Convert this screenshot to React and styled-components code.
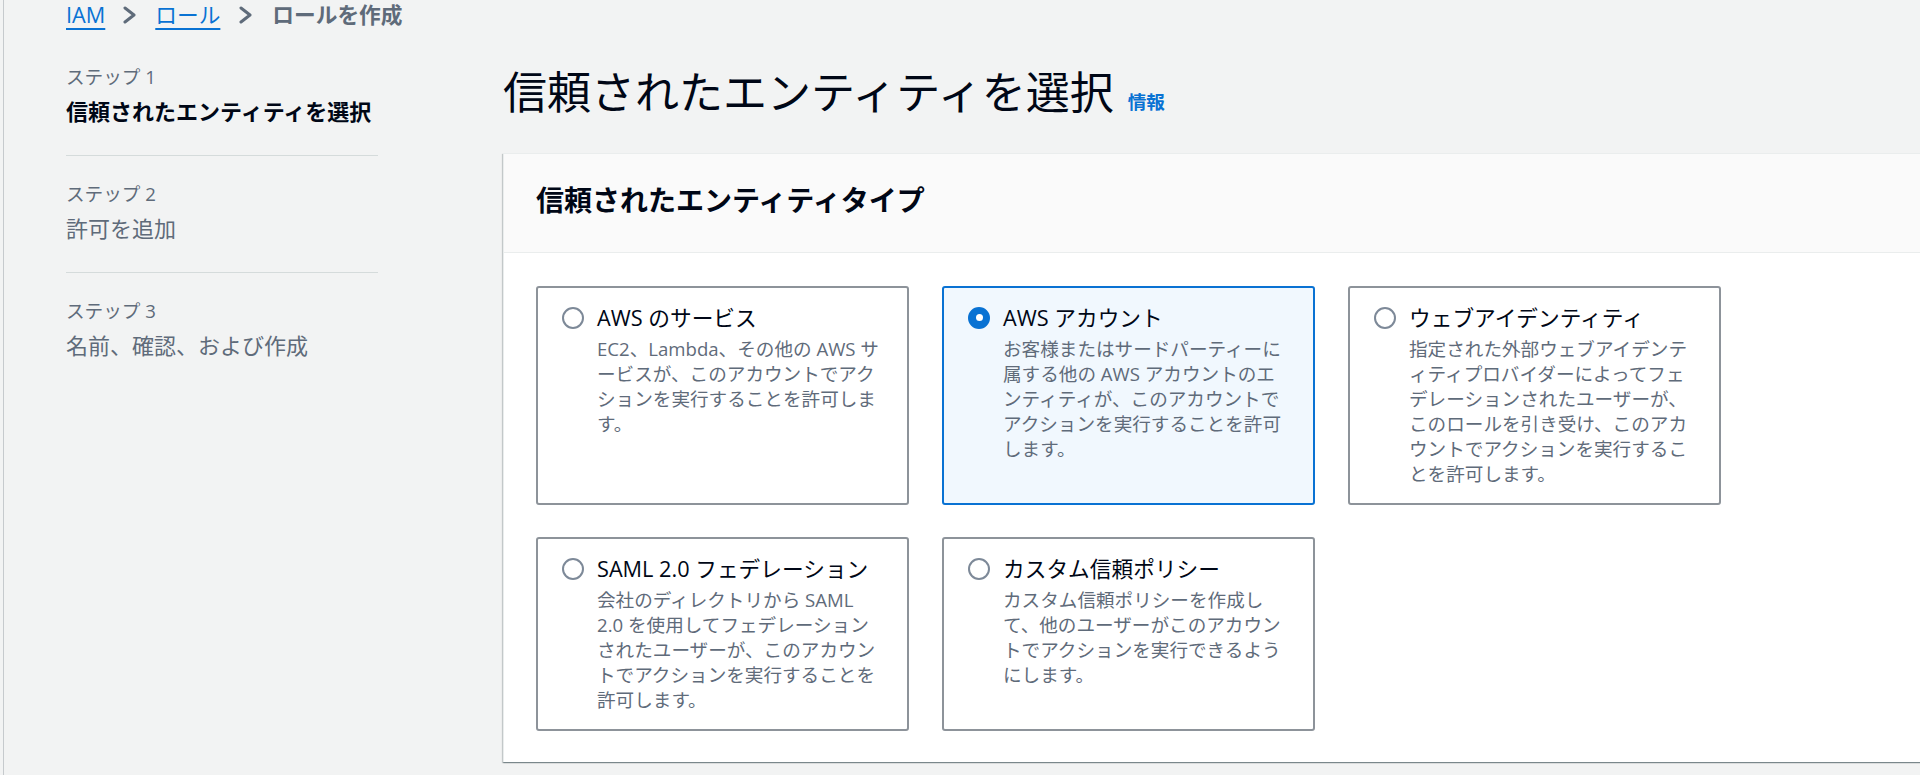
import React from "react";
import styled, { createGlobalStyle, css } from "styled-components";

const GlobalStyle = createGlobalStyle`
  html, body {
    margin: 0;
    padding: 0;
    background: #f2f3f3;
    overflow: hidden;
  }
  body {
    font-family: "Open Sans", "Noto Sans CJK JP", sans-serif;
    color: #000716;
    -webkit-font-smoothing: antialiased;
  }
  * { box-sizing: border-box; }
`;

const Page = styled.div`
  margin-left: 3px;
  border-left: 1px solid #c6cacd;
  padding-left: 62px;
  min-height: 775px;
  line-break: normal;
`;

const Breadcrumbs = styled.nav`
  display: flex;
  align-items: center;
  height: 29px;
  font-size: 21.7px;
  line-height: 29px;
  margin-bottom: 35px;
`;

const CrumbLink = styled.a`
  color: #0972d3;
  text-decoration: underline;
  text-decoration-thickness: 1.5px;
  text-underline-offset: 5px;
  cursor: pointer;
`;

const CrumbCurrent = styled.span`
  color: #5f6b7a;
  font-weight: 700;
`;

const Chevron = styled.svg`
  width: 16px;
  height: 18px;
  margin: 0 ${(p) => p.$gap || 17}px;
  flex: none;
`;

const Layout = styled.div`
  display: grid;
  grid-template-columns: 312px minmax(1460px, 1fr);
  column-gap: 125px;
  align-items: start;
`;

const StepNav = styled.ol`
  list-style: none;
  margin: 0;
  padding: 0;
`;

const Step = styled.li`
  padding: 25px 0 28px;
  border-bottom: 1px solid #d5dbdb;
  &:first-child { padding-top: 0; }
  &:last-child { border-bottom: none; }
`;

const StepLabel = styled.div`
  font-size: 18.6px;
  line-height: 25px;
  color: #5f6b7a;
  margin-bottom: 7px;
`;

const StepTitle = styled.div`
  font-size: 22px;
  line-height: 31px;
  color: ${(p) => (p.$active ? "#000716" : "#5f6b7a")};
  font-weight: ${(p) => (p.$active ? 700 : 400)};
`;

const Main = styled.main`
  min-width: 0;
`;

const HeaderRow = styled.div`
  display: flex;
  align-items: baseline;
  margin-bottom: 33px;
`;

const H1 = styled.h1`
  margin: 0;
  font-size: 44px;
  line-height: 56px;
  font-weight: 400;
  color: #000716;
`;

const InfoLink = styled.a`
  margin-left: 14px;
  font-size: 18.6px;
  font-weight: 700;
  color: #0972d3;
  cursor: pointer;
`;

const Card = styled.section`
  background: #ffffff;
  border-top: 1px solid #eaeded;
  border-left: 1px solid #eaeded;
  box-shadow: 0 1px 1px 0 rgba(0, 28, 36, 0.3), 1px 1px 1px 0 rgba(0, 28, 36, 0.15),
    -1px 1px 1px 0 rgba(0, 28, 36, 0.15);
`;

const CardHeader = styled.header`
  background: #fafafa;
  border-bottom: 1px solid #eaeded;
  padding: 29px 32px 35px;
`;

const H2 = styled.h2`
  margin: 0;
  font-size: 28px;
  line-height: 34px;
  font-weight: 700;
  color: #000716;
`;

const CardBody = styled.div`
  padding: 33px 32px 31px;
`;

const TileGrid = styled.div`
  display: grid;
  grid-template-columns: repeat(3, 373px);
  column-gap: 33px;
  row-gap: 32px;
`;

const Tile = styled.label`
  display: flex;
  align-items: flex-start;
  gap: 13px;
  padding: 14px 26px 17px 24px;
  border: 2px solid #8d939a;
  border-radius: 3px;
  background: #ffffff;
  cursor: pointer;
  ${(p) =>
    p.$selected &&
    css`
      border-color: #0972d3;
      background: #f1f8fe;
    `}
`;

const RadioWrap = styled.span`
  flex: none;
  height: 31px;
  display: flex;
  align-items: center;
`;

const Radio = styled.span`
  position: relative;
  width: 22px;
  height: 22px;
  border-radius: 50%;
  border: 2px solid #7d8998;
  background: #ffffff;
  ${(p) =>
    p.$checked &&
    css`
      border-color: #0972d3;
      background: #0972d3;
      &::after {
        content: "";
        position: absolute;
        left: 50%;
        top: 50%;
        width: 7px;
        height: 7px;
        margin: -3.5px 0 0 -3.5px;
        border-radius: 50%;
        background: #ffffff;
      }
    `}
`;

const TileText = styled.span`
  display: flex;
  flex-direction: column;
  min-width: 0;
`;

const TileTitle = styled.span`
  font-size: 21.7px;
  line-height: 31px;
  color: #000716;
`;

const TileDesc = styled.span`
  margin-top: 3px;
  font-size: 18.6px;
  line-height: 25px;
  color: #5f6b7a;
`;

const ChevronIcon = ({ gap }) => (
  <Chevron $gap={gap} viewBox="0 0 16 18" aria-hidden="true">
    <polyline
      points="3,2 12,9 3,16"
      fill="none"
      stroke="#5f6b7a"
      strokeWidth="3"
      strokeLinecap="round"
      strokeLinejoin="round"
    />
  </Chevron>
);

const steps = [
  { label: "ステップ 1", title: "信頼されたエンティティを選択", active: true },
  { label: "ステップ 2", title: "許可を追加" },
  { label: "ステップ 3", title: "名前、確認、および作成" },
];

const options = [
  {
    title: "AWS のサービス",
    desc: "EC2、Lambda、その他の AWS サービスが、このアカウントでアクションを実行することを許可します。",
  },
  {
    title: "AWS アカウント",
    desc: "お客様またはサードパーティーに属する他の AWS アカウントのエンティティが、このアカウントでアクションを実行することを許可します。",
    selected: true,
  },
  {
    title: "ウェブアイデンティティ",
    desc: "指定された外部ウェブアイデンティティプロバイダーによってフェデレーションされたユーザーが、このロールを引き受け、このアカウントでアクションを実行することを許可します。",
  },
  {
    title: "SAML 2.0 フェデレーション",
    desc: "会社のディレクトリから SAML 2.0 を使用してフェデレーションされたユーザーが、このアカウントでアクションを実行することを許可します。",
  },
  {
    title: "カスタム信頼ポリシー",
    desc: "カスタム信頼ポリシーを作成して、他のユーザーがこのアカウントでアクションを実行できるようにします。",
  },
];

export default function App() {
  return (
    <>
      <GlobalStyle />
      <Page lang="ja">
        <Breadcrumbs>
          <CrumbLink>IAM</CrumbLink>
          <ChevronIcon />
          <CrumbLink>ロール</CrumbLink>
          <ChevronIcon gap={18} />
          <CrumbCurrent>ロールを作成</CrumbCurrent>
        </Breadcrumbs>
        <Layout>
          <StepNav>
            {steps.map((s) => (
              <Step key={s.label}>
                <StepLabel>{s.label}</StepLabel>
                <StepTitle $active={s.active}>{s.title}</StepTitle>
              </Step>
            ))}
          </StepNav>
          <Main>
            <HeaderRow>
              <H1>信頼されたエンティティを選択</H1>
              <InfoLink>情報</InfoLink>
            </HeaderRow>
            <Card>
              <CardHeader>
                <H2>信頼されたエンティティタイプ</H2>
              </CardHeader>
              <CardBody>
                <TileGrid>
                  {options.map((o) => (
                    <Tile key={o.title} $selected={o.selected}>
                      <RadioWrap>
                        <Radio $checked={o.selected} />
                      </RadioWrap>
                      <TileText>
                        <TileTitle>{o.title}</TileTitle>
                        <TileDesc>{o.desc}</TileDesc>
                      </TileText>
                    </Tile>
                  ))}
                </TileGrid>
              </CardBody>
            </Card>
          </Main>
        </Layout>
      </Page>
    </>
  );
}
